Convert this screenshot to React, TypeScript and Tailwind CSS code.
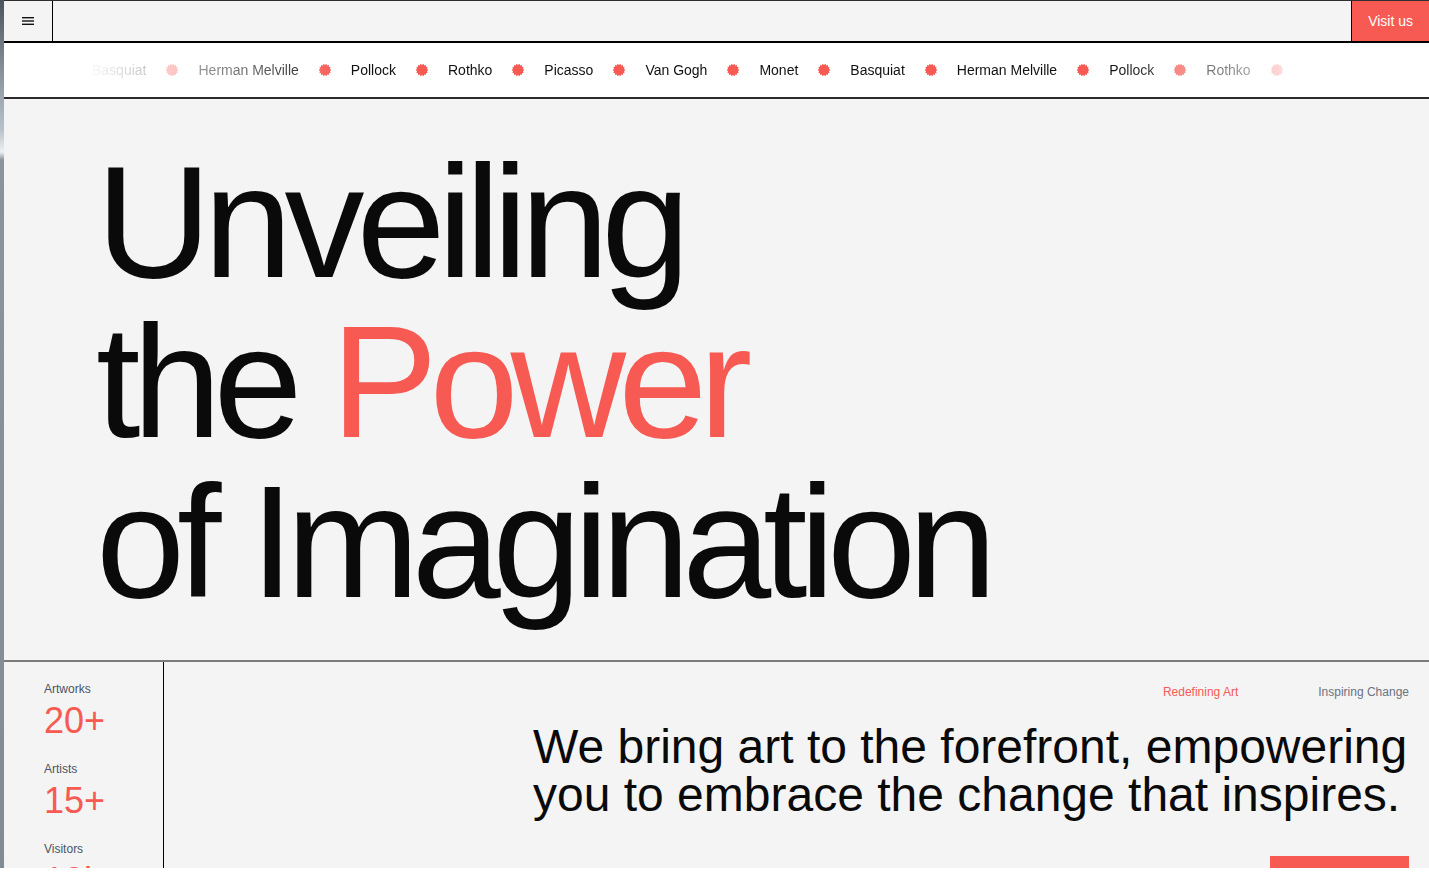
const names = [
  "Basquiat",
  "Herman Melville",
  "Pollock",
  "Rothko",
  "Picasso",
  "Van Gogh",
  "Monet",
  "Basquiat",
  "Herman Melville",
  "Pollock",
  "Rothko",
  "Picasso",
  "Van Gogh",
];

// jagged little sun used between the names
const starPoints = Array.from({ length: 28 }, (_, i) => {
  const a = (i / 28) * Math.PI * 2;
  const r = i % 2 === 0 ? 6.3 : 5.1;
  return `${(Math.cos(a) * r).toFixed(2)},${(Math.sin(a) * r).toFixed(2)}`;
}).join(" ");

function Burst() {
  return (
    <svg width="14" height="14" viewBox="-7 -7 14 14" className="shrink-0">
      <polygon points={starPoints} fill="#f65a53" />
    </svg>
  );
}

function Stat({ label, value }: { label: string; value: string }) {
  return (
    <div>
      <p className="text-xs leading-4 text-[#4b5563] mb-1">{label}</p>
      <p className="text-[36px] leading-10 text-[#f65a53]">{value}</p>
    </div>
  );
}

export default function App() {
  return (
    <div className="w-full h-[892px] bg-white font-['Liberation_Sans',Arial,sans-serif]">
      <div className="flex h-[868px] overflow-hidden">
        {/* window edge */}
        <div className="w-1 shrink-0 bg-[linear-gradient(to_bottom,#4a545c_0px,#7d8891_60px,#b9c2c8_130px,#eef1f3_152px,#8a949c_160px,#808b94_100%)]"></div>

        <div className="flex-1 min-w-0 flex flex-col border-t border-[#2f2f2f] bg-[#f4f4f4] overflow-hidden">
          {/* top bar */}
          <header className="h-[42px] shrink-0 flex border-b-2 border-black">
            <div className="w-[49px] border-r border-black flex items-center justify-center">
              <svg width="12" height="8" viewBox="0 0 12 8">
                <rect x="0" y="0" width="12" height="1.4" fill="#111" />
                <rect x="0" y="3.3" width="12" height="1.4" fill="#111" />
                <rect x="0" y="6.6" width="12" height="1.4" fill="#111" />
              </svg>
            </div>
            <div className="flex-1"></div>
            <button className="border-l border-black bg-[#f65a53] px-4 text-sm text-white">
              Visit us
            </button>
          </header>

          {/* artist ticker */}
          <div className="h-[56px] shrink-0 min-w-0 bg-white border-b-2 border-[#2b2b2b] overflow-hidden">
            <div className="flex items-center h-full gap-[19px] pl-[88px] whitespace-nowrap text-sm text-[#111] [mask-image:linear-gradient(to_right,transparent_80px,black_340px,black_1106px,rgba(0,0,0,0.5)_1224px,rgba(0,0,0,0.25)_1274px,transparent_1296px)]">
              {names.map((n, i) => (
                <div key={i} className="flex shrink-0 items-center gap-[19px]">
                  <span>{n}</span>
                  <Burst />
                </div>
              ))}
            </div>
          </div>

          {/* hero */}
          <section className="h-[561px] shrink-0 pl-[92px] pt-[43px]">
            <h1 className="text-[160px] leading-none tracking-[-0.05em] text-[#0a0a0a]">
              Unveiling
              <br />
              the <span className="text-[#f65a53]">Power</span>
              <br />
              of Imagination
            </h1>
          </section>

          {/* stats + mission */}
          <section className="flex flex-1 min-w-0 border-t-2 border-[#7b7b7b]">
            <div className="w-[160px] shrink-0 border-r border-black pl-10 pt-[19px] flex flex-col gap-5">
              <Stat label="Artworks" value="20+" />
              <Stat label="Artists" value="15+" />
              <Stat label="Visitors" value="10k+" />
            </div>
            <div className="flex-1 min-w-0 pr-5 pt-[22px]">
              <div className="flex justify-end gap-20 text-xs leading-4">
                <span className="text-[#f65a53]">Redefining Art</span>
                <span className="text-[#6b7280]">Inspiring Change</span>
              </div>
              <p className="ml-auto mt-[23px] w-[876px] text-5xl leading-none text-[#0a0a0a]">
                We bring art to the forefront, empowering you to embrace the change that inspires.
              </p>
              <div className="ml-auto mt-[37px] w-[139px] h-12 bg-[#f65a53]"></div>
            </div>
          </section>
        </div>
      </div>
    </div>
  );
}
